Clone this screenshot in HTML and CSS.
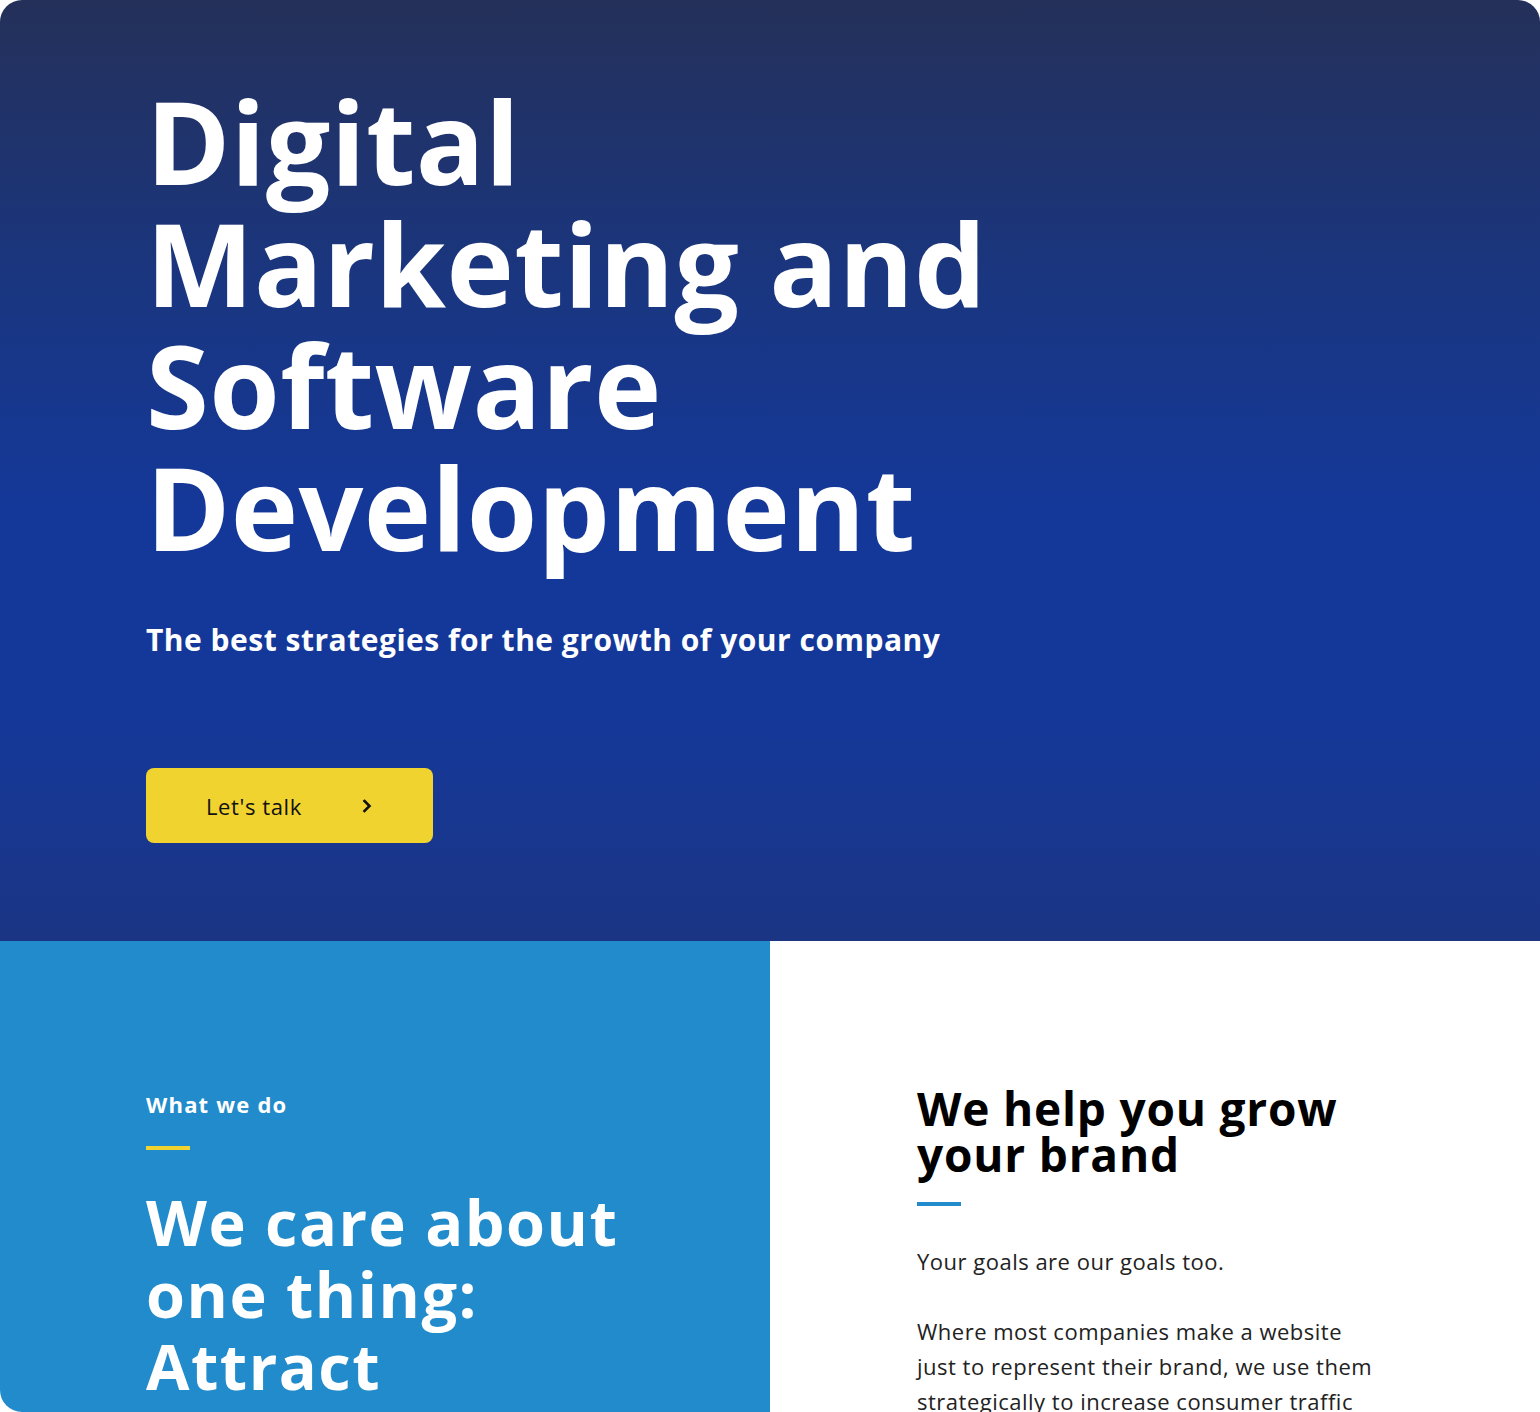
FILE: index.html
```html
<!DOCTYPE html>
<html lang="en">
<head>
<meta charset="utf-8">
<title>Digital Marketing and Software Development</title>
<link rel="stylesheet" href="styles.css">
</head>
<body>
<div class="page">
  <section class="hero">
    <h1 class="hero-title">Digital<br>Marketing and<br>Software<br>Development</h1>
    <p class="hero-sub">The best strategies for the growth of your company</p>
    <a class="btn" href="#">
      <span>Let's talk</span>
      <svg class="chev" width="12" height="14" viewBox="0 0 12 14"><path d="M3.5 2 L8.5 7 L3.5 12" fill="none" stroke="#111" stroke-width="2.6" stroke-linecap="square"/></svg>
    </a>
  </section>
  <section class="about">
    <div class="about-left">
      <p class="eyebrow">What we do</p>
      <div class="bar bar-yellow"></div>
      <h2 class="care">We care about one thing: Attract</h2>
    </div>
    <div class="about-right">
      <h3 class="grow">We help you grow your brand</h3>
      <div class="bar bar-blue"></div>
      <p class="body">Your goals are our goals too.</p>
      <p class="body">Where most companies make a website just to represent their brand, we use them strategically to increase consumer traffic</p>
    </div>
  </section>
</div>
</body>
</html>
```

FILE: styles.css
```css
html, body {
  margin: 0;
  padding: 0;
  background: #ffffff;
}
body {
  font-family: "Open Sans", "DejaVu Sans", sans-serif;
}
.page {
  width: 1540px;
  height: 1412px;
  border-radius: 22px;
  overflow: hidden;
  background: #ffffff;
}
.hero {
  height: 941px;
  box-sizing: border-box;
  padding: 80px 0 0 146px;
  background: linear-gradient(180deg, #243059 0%, #1a3680 30%, #14389a 55%, #14389a 75%, #1b3584 100%);
  color: #fff;
}
.hero-title {
  margin: 0;
  font-weight: 700;
  font-size: 114px;
  line-height: 122px;
  letter-spacing: 0.4px;
}
.hero-sub {
  margin: 52px 0 0;
  font-weight: 700;
  font-size: 30px;
  line-height: 40px;
  letter-spacing: 0.5px;
}
.btn {
  margin-top: 108px;
  width: 287px;
  height: 75px;
  box-sizing: border-box;
  padding: 0 60px;
  border-radius: 8px;
  background: #f0d32f;
  color: #111;
  text-decoration: none;
  display: flex;
  align-items: center;
  justify-content: space-between;
  font-size: 22px;
  letter-spacing: 0.6px;
}
.about {
  display: flex;
  height: 471px;
}
.about-left {
  width: 770px;
  background: #218bcb;
  color: #fff;
  box-sizing: border-box;
  padding: 148px 0 0 146px;
}
.about-right {
  flex: 1;
  box-sizing: border-box;
  padding: 144px 150px 0 147px;
  color: #111;
}
.eyebrow {
  margin: 0;
  font-weight: 700;
  font-size: 22px;
  line-height: 30px;
  letter-spacing: 1.2px;
}
.bar {
  width: 44px;
  height: 4px;
}
.bar-yellow {
  background: #f0d32f;
  margin-top: 27px;
}
.bar-blue {
  background: #218bcb;
  margin-top: 25px;
}
.care {
  margin: 36px 0 0;
  font-weight: 700;
  font-size: 63px;
  line-height: 72px;
  letter-spacing: 1.5px;
  width: 540px;
}
.grow {
  margin: 0;
  font-weight: 700;
  font-size: 46px;
  line-height: 46px;
  letter-spacing: 0.8px;
  color: #000;
}
.body {
  margin: 38px 0 0;
  max-width: 466px;
  font-size: 22px;
  line-height: 35px;
  letter-spacing: 0.5px;
  color: #222;
}
.body + .body {
  margin-top: 35px;
}
```
